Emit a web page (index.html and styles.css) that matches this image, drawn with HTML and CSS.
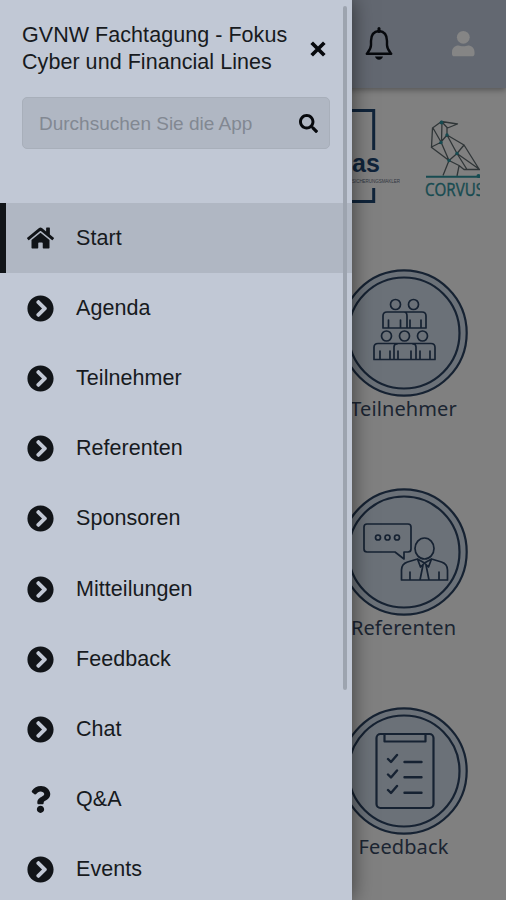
FILE: index.html
```html
<!DOCTYPE html>
<html lang="de">
<head>
<meta charset="utf-8">
<title>GVNW Fachtagung</title>
<link rel="stylesheet" href="styles.css">
</head>
<body>
<svg class="defs" width="0" height="0">
  <symbol id="go" viewBox="0 0 512 512"><path d="M256 8c137 0 248 111 248 248S393 504 256 504 8 393 8 256 119 8 256 8zm113.9 231L234.4 103.5c-9.4-9.4-24.6-9.4-33.9 0l-17 17c-9.4 9.4-9.4 24.6 0 33.9L285.1 256 183.5 357.6c-9.4 9.4-9.4 24.6 0 33.9l17 17c9.4 9.4 24.6 9.4 33.9 0L369.9 273c9.4-9.4 9.4-24.6 0-34z"/></symbol>
</svg>
<div class="app">
  <header class="topbar">
    <svg class="bell" viewBox="0 0 28 34" width="28" height="34"><path d="M14 4C8 4.500 6 9 6 14v4c0 4-2 6-4.200 8.700h24.400C24 24 22 22 22 18v-4c0-5-2-9.500-8-10z" fill="none" stroke="#07090d" stroke-width="2.400" stroke-linejoin="round"/><path d="M14 1.500v3" stroke="#07090d" stroke-width="3" stroke-linecap="round"/><path d="M10 29.500h8c-.5 2-2 3.200-4 3.200s-3.500-1.200-4-3.200z" fill="#07090d"/></svg>
    <svg class="user" viewBox="0 0 24 28" width="24" height="28"><circle cx="12.300" cy="7.300" r="6.400"/><path d="M1 22c0-4 3-6.500 6.500-6.500 2 1 7.500 1 9.500 0 3.500 0 6.500 2.500 6.500 6.500v2c0 1.500-1 2.300-2.300 2.300H3.300C2 26.300 1 25.500 1 24z"/></svg>
  </header>
  <section class="sponsors">
    <svg width="60" height="100" viewBox="340 105 60 100">
      <path d="M340 110.500h33.700v39.500M373.700 188v13.500H340" fill="none" stroke="#10243a" stroke-width="3"/>
      <text x="352" y="172" class="brand">as</text>
      <text x="352" y="183" class="brand-sub" textLength="48">SICHERUNGSMAKLER</text>
    </svg>
    <svg width="56" height="90" viewBox="424 115 56 90">
      <g fill="none" stroke="#303638" stroke-width="1.300" stroke-linejoin="round">
        <path d="M441.500 121.500l16 2.500-10 4-6-6.500-9 6.500-1 19 10-5 .5-20.500M433 128l8 14 6-7v-7M447 135l17 10-7 8.500-10-18.500M441 142l8 18.500 8-7 22 15.500-15-24M431 147l18 13.500 10 5 5 4h16M457 153.500l10 16M449 160.500l-6 15M459 166l-2 10"/>
      </g>
      <g fill="#174b51"><circle cx="441.500" cy="122.500" r="1.900"/><circle cx="447" cy="135" r="1.700"/><circle cx="441" cy="142.500" r="1.700"/><circle cx="457" cy="153.500" r="1.700"/><circle cx="449" cy="160.500" r="1.700"/><circle cx="478.500" cy="176" r="2"/></g>
      <path d="M426 176.700h54" stroke="#174b51" stroke-width="2"/>
      <text x="425" y="196" class="corvus" textLength="59" lengthAdjust="spacingAndGlyphs">CORVUS</text>
    </svg>
  </section>
  <main class="tiles">
    <div class="tile">
      <svg viewBox="0 0 128 128" width="128" height="128"><circle class="disc" cx="64" cy="64" r="62.700"/><circle cx="64" cy="64" r="55.500"/>
        <g class="thin"><circle cx="55.500" cy="35.500" r="5"/><circle cx="73.500" cy="35.500" r="5"/>
        <path d="M47 43h35q4 0 4 4v12H43V47q0-4 4-4zM48.500 59v-8M60.500 59v-8M64 43q3 0 3 4v12M70 59v-8M81 59v-8"/>
        <circle cx="46.500" cy="67" r="5"/><circle cx="64.500" cy="67" r="5"/><circle cx="82.500" cy="67" r="5"/>
        <path d="M38 74.500h53q4 0 4 4v12H34v-12q0-4 4-4zM40 90v-8M50 90v-8M54 90V78q0-3 3-3M58 90v-8M71 90v-8M73 75q3 0 3 3v12M80 90v-8M90 90v-8"/></g></svg>
      <span>Teilnehmer</span>
    </div>
    <div class="tile">
      <svg viewBox="0 0 128 128" width="128" height="128"><circle class="disc" cx="64" cy="64" r="62.700"/><circle cx="64" cy="64" r="55.500"/>
        <g class="thin"><path d="M27 36h41q3 0 3 3v22q0 3-3 3h-4v7l-9-7H27q-3 0-3-3V39q0-3 3-3z"/>
        <circle cx="38" cy="49.500" r="2.500"/><circle cx="47.500" cy="49.500" r="2.500"/><circle cx="57" cy="49.500" r="2.500"/>
        <ellipse cx="84.500" cy="60.500" rx="9.500" ry="10.500"/>
        <path d="M61.500 92V82q0-6 6-8l10-3 7 4 7-4 10 3q6 2 6 8v10zM70 92v-8M99 92v-8M77.500 71l3 8 4-4 4 4 3-8M83 77l-3 15M86 77l3 15"/></g></svg>
      <span>Referenten</span>
    </div>
    <div class="tile">
      <svg viewBox="0 0 128 128" width="128" height="128"><circle class="disc" cx="64" cy="64" r="62.700"/><circle cx="64" cy="64" r="55.500"/>
        <rect x="36.500" y="27" width="57" height="74" rx="4"/><path d="M44.500 27v7.500h41V27"/>
        <path class="mark" d="M48 52l3 3 6-7M48 67.500l3 3 6-7M48 83l3 3 6-7M64.500 55h17M64.500 70.200h17M64.500 85.700h17"/></svg>
      <span>Feedback</span>
    </div>
  </main>
</div>
<aside class="drawer">
  <div class="drawer-head">
    <h1>GVNW Fachtagung - Fokus<br>Cyber und Financial Lines</h1>
    <svg class="close" viewBox="0 0 16 16" width="16" height="16"><path d="M3 3l10 10M13 3L3 13" stroke="#07090d" stroke-width="3.700" stroke-linecap="square"/></svg>
  </div>
  <div class="search">
    <span>Durchsuchen Sie die App</span>
    <svg viewBox="0 0 512 512" width="19" height="19"><path d="M505 442.700L405.300 343c-4.500-4.500-10.600-7-17-7H372c27.600-35.300 44-79.700 44-128C416 93.100 322.900 0 208 0S0 93.100 0 208s93.100 208 208 208c48.300 0 92.700-16.400 128-44v16.300c0 6.400 2.500 12.500 7 17l99.700 99.700c9.400 9.400 24.600 9.400 33.900 0l28.300-28.300c9.400-9.400 9.400-24.600.1-34zM208 336c-70.700 0-128-57.200-128-128 0-70.700 57.200-128 128-128 70.700 0 128 57.200 128 128 0 70.700-57.200 128-128 128z"/></svg>
  </div>
  <nav>
    <a class="item active"><svg viewBox="0 0 576 512" width="27" height="24"><path d="M280.370 148.260L96 300.110V464a16 16 0 0 0 16 16l112.060-.29a16 16 0 0 0 15.920-16V368a16 16 0 0 1 16-16h64a16 16 0 0 1 16 16v95.640a16 16 0 0 0 16 16.050L464 480a16 16 0 0 0 16-16V300L295.670 148.260a12.190 12.190 0 0 0-15.300 0zM571.600 251.470L488 182.560V44.050a12 12 0 0 0-12-12h-56a12 12 0 0 0-12 12v72.610L318.470 43a48 48 0 0 0-61 0L4.340 251.470a12 12 0 0 0-1.600 16.900l25.500 31A12 12 0 0 0 45.150 301l235.220-193.740a12.190 12.190 0 0 1 15.300 0L530.900 301a12 12 0 0 0 16.900-1.600l25.500-31a12 12 0 0 0-1.700-16.930z"/></svg><span>Start</span></a>
    <a class="item"><svg width="27" height="27"><use href="#go"/></svg><span>Agenda</span></a>
    <a class="item"><svg width="27" height="27"><use href="#go"/></svg><span>Teilnehmer</span></a>
    <a class="item"><svg width="27" height="27"><use href="#go"/></svg><span>Referenten</span></a>
    <a class="item"><svg width="27" height="27"><use href="#go"/></svg><span>Sponsoren</span></a>
    <a class="item"><svg width="27" height="27"><use href="#go"/></svg><span>Mitteilungen</span></a>
    <a class="item"><svg width="27" height="27"><use href="#go"/></svg><span>Feedback</span></a>
    <a class="item"><svg width="27" height="27"><use href="#go"/></svg><span>Chat</span></a>
    <a class="item"><svg viewBox="0 0 384 512" width="27" height="27"><path d="M202.021 0C122.202 0 70.503 32.703 29.914 91.026c-7.363 10.580-5.093 25.086 5.178 32.874l43.138 32.709c10.373 7.865 25.132 6.026 33.253-4.148 25.049-31.381 43.630-49.449 82.757-49.449 30.764 0 68.816 19.799 68.816 49.631 0 22.552-18.617 34.134-48.993 51.164-35.423 19.860-82.299 44.576-82.299 106.405V320c0 13.255 10.745 24 24 24h72.471c13.255 0 24-10.745 24-24v-5.773c0-42.860 125.268-44.645 125.268-160.627C377.504 66.256 286.902 0 202.021 0zM192 373.459c-38.196 0-69.271 31.075-69.271 69.271 0 38.195 31.075 69.270 69.271 69.270s69.271-31.075 69.271-69.271-31.075-69.270-69.271-69.270z"/></svg><span>Q&amp;A</span></a>
    <a class="item"><svg width="27" height="27"><use href="#go"/></svg><span>Events</span></a>
  </nav>
  <div class="scrollbar"></div>
</aside>
</body>
</html>
```
FILE: styles.css
```css
* { box-sizing: border-box; }
body {
  margin: 0;
  height: 900px;
  position: relative;
  overflow: hidden;
  background: #808080;
  font-family: "Liberation Sans", Arial, sans-serif;
}
.defs { position: absolute; }
.app { height: 900px; }
.topbar {
  display: flex;
  align-items: center;
  justify-content: flex-end;
  gap: 58px;
  height: 88px;
  padding-right: 31px;
  background: #636871;
  box-shadow: 0 2px 6px rgba(0, 0, 0, .35);
}
.user { fill: #858585; }
.sponsors {
  display: flex;
  align-items: flex-start;
  gap: 24px;
  padding: 17px 0 0 340px;
  height: 181px;
}
.sponsors svg:last-child { margin-top: 10px; }
.brand { font: bold 25px "Liberation Sans", sans-serif; fill: #10243a; }
.brand-sub { font: 4.500px "Liberation Sans", sans-serif; fill: #303640; }
.corvus { font: 17.500px "Open Sans", sans-serif; fill: #174b51; stroke: #174b51; stroke-width: .4px; }
.tiles {
  display: grid;
  grid-template-columns: 128px;
  grid-auto-rows: 219px;
  padding-left: 339.500px;
}
.tile {
  display: flex;
  flex-direction: column;
  align-items: center;
  color: #1b2532;
  font: 20px/24px "Noto Sans", sans-serif;
  letter-spacing: .1px;
}
.tile svg { fill: none; stroke: #162232; stroke-width: 2.200; stroke-linecap: round; stroke-linejoin: round; }
.tile .disc { fill: #6b7178; }
.tile .thin { stroke-width: 1.700; }
.tile .mark { stroke-width: 2.400; }
.drawer {
  position: absolute;
  top: 0;
  left: 0;
  width: 351.500px;
  height: 900px;
  background: #c1c8d5;
  box-shadow: 0 0 20px rgba(0, 0, 0, .55);
  color: #171a20;
}
.drawer-head { display: flex; padding: 22px 0 0 22px; height: 97px; }
h1 { margin: 0; width: 288px; font-size: 21.500px; line-height: 27px; font-weight: 400; letter-spacing: .05px; white-space: nowrap; }
.close { margin-top: 19px; }
.search {
  display: flex;
  align-items: center;
  justify-content: space-between;
  width: 308px;
  height: 52px;
  margin-left: 22px;
  padding: 0 11px 0 16px;
  border: 1px solid #a8afba;
  border-radius: 5px;
  background: #b0b7c3;
  color: #828892;
  font-size: 19px;
}
.search span { padding-top: 2px; }
.search svg { fill: #07090d; }
nav { margin-top: 54px; height: 697px; overflow: hidden; }
.item {
  display: flex;
  align-items: center;
  gap: 22px;
  height: 70.200px;
  padding-left: 27px;
  font-size: 21.500px;
  letter-spacing: .05px;
}
.item svg { fill: #111418; flex: none; }
.active { background: #b0b7c3; border-left: 6px solid #111418; padding-left: 21px; }
.scrollbar {
  position: absolute;
  top: 6px;
  right: 5px;
  width: 4px;
  height: 684px;
  border-radius: 2px;
  background: #9da4af;
}
```
